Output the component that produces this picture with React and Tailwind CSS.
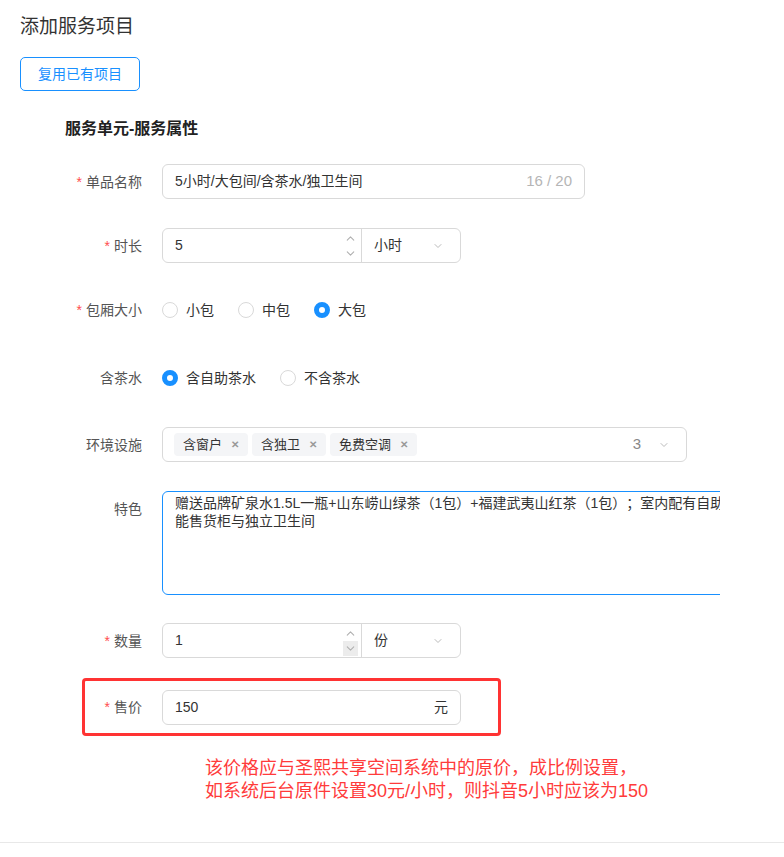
import { ChevronDown, ChevronUp } from 'lucide-react'

function Label({ required, children }) {
  return (
    <div className="w-[122px] shrink-0 text-right text-[14px] text-[#555] leading-[20px]">
      {required && <span className="text-[#ff4d4f] mr-1">*</span>}
      {children}
    </div>
  )
}

function Radio({ checked, label }) {
  return (
    <div className="flex items-center gap-2 mr-6">
      {checked ? (
        <span className="w-4 h-4 rounded-full border-[5px] border-[#1890ff] bg-white" />
      ) : (
        <span className="w-4 h-4 rounded-full border border-[#d9d9d9] bg-white" />
      )}
      <span className="text-[14px] text-[#333] leading-[20px]">{label}</span>
    </div>
  )
}

function Tag({ children }) {
  return (
    <div className="flex items-center h-[23px] pl-[9px] pr-[9px] rounded bg-[#f4f5f7] text-[13px] text-[#333] gap-[9px]">
      {children}
      <span className="text-[10px] font-bold text-[#999] leading-none">✕</span>
    </div>
  )
}

function NumberWithUnit({ value, unit, hoverDown }) {
  return (
    <div className="flex w-[299px] h-[35px] border border-[#d9d9d9] rounded-[6px] bg-white">
      <div className="flex-1 flex items-center pl-3 text-[14px] text-[#333]">{value}</div>
      <div className="w-[16px] mr-[3px] flex flex-col items-center justify-center text-[#b0b0b0]">
        <div className="h-[15px] w-[15px] flex items-center justify-center">
          <ChevronUp size={13} strokeWidth={2} />
        </div>
        <div className={`h-[15px] w-[15px] flex items-center justify-center ${hoverDown ? 'bg-[#ececec]' : ''}`}>
          <ChevronDown size={13} strokeWidth={2} />
        </div>
      </div>
      <div className="w-[99px] border-l border-[#d9d9d9] flex items-center justify-between pl-3 pr-4 text-[14px] text-[#333]">
        <span>{unit}</span>
        <ChevronDown size={12} strokeWidth={2} className="text-[#bbb]" />
      </div>
    </div>
  )
}

export default function App() {
  return (
    <div className="min-h-[857px] bg-white font-['Liberation_Sans','Noto_Sans_CJK_SC',sans-serif] [text-spacing-trim:space-all] text-[#333] overflow-hidden">
      <div className="w-[784px] h-[843px] px-5 pt-[14px] border-b border-[#e8e8e8]">
        <h1 className="text-[19px] leading-[26px] text-[#333]">添加服务项目</h1>

        <button className="mt-[17px] h-[34px] px-[17px] border border-[#1890ff] rounded-[5px] text-[14px] text-[#1890ff] bg-white">
          复用已有项目
        </button>

        <div className="mt-[27px] ml-[45px] text-[16px] font-bold leading-[22px] text-[#222]">服务单元-服务属性</div>

        {/* 单品名称 */}
        <div className="mt-[24px] flex items-center">
          <Label required>单品名称</Label>
          <div className="ml-5 w-[423px] h-[35px] border border-[#d9d9d9] rounded-[6px] flex items-center justify-between pl-3 pr-3 text-[14px]">
            <span className="text-[#333]">5小时/大包间/含茶水/独卫生间</span>
            <span className="text-[15px] text-[#b5b5b5]">16 / 20</span>
          </div>
        </div>

        {/* 时长 */}
        <div className="mt-[29px] flex items-center">
          <Label required>时长</Label>
          <div className="ml-5">
            <NumberWithUnit value="5" unit="小时" />
          </div>
        </div>

        {/* 包厢大小 */}
        <div className="mt-[29px] h-[35px] flex items-center">
          <Label required>包厢大小</Label>
          <div className="ml-5 flex items-center">
            <Radio label="小包" />
            <Radio label="中包" />
            <Radio checked label="大包" />
          </div>
        </div>

        {/* 含茶水 */}
        <div className="mt-[33px] h-[35px] flex items-center">
          <Label>含茶水</Label>
          <div className="ml-5 flex items-center">
            <Radio checked label="含自助茶水" />
            <Radio label="不含茶水" />
          </div>
        </div>

        {/* 环境设施 */}
        <div className="mt-[32px] flex items-center">
          <Label>环境设施</Label>
          <div className="ml-5 w-[525px] h-[35px] border border-[#d9d9d9] rounded-[6px] flex items-center justify-between pl-[11px] pr-4">
            <div className="flex items-center gap-1">
              <Tag>含窗户</Tag>
              <Tag>含独卫</Tag>
              <Tag>免费空调</Tag>
            </div>
            <div className="flex items-center gap-[17px] text-[15px] text-[#888]">
              <span>3</span>
              <ChevronDown size={12} strokeWidth={2} className="text-[#bbb]" />
            </div>
          </div>
        </div>

        {/* 特色 */}
        <div className="mt-[29px] flex items-start w-[700px] overflow-hidden">
          <div className="pt-[8px]">
            <Label>特色</Label>
          </div>
          <div className="ml-5 shrink-0 w-[620px] h-[104px] border border-[#1890ff] rounded-[6px] pl-3 pt-[2px] text-[14px] leading-[18px] text-[#333] whitespace-nowrap">
            赠送品牌矿泉水1.5L一瓶+山东崂山绿茶（1包）+福建武夷山红茶（1包）；室内配有自助
            <br />
            能售货柜与独立卫生间
          </div>
        </div>

        {/* 数量 */}
        <div className="mt-[28px] flex items-center">
          <Label required>数量</Label>
          <div className="ml-5">
            <NumberWithUnit value="1" unit="份" hoverDown />
          </div>
        </div>

        {/* 售价 */}
        <div className="mt-[20px] ml-[62px] w-[419px] h-[58px] border-[3px] border-[#ff3333] rounded-[4px] flex items-center">
          <div className="w-[57px] shrink-0 text-right text-[14px] text-[#555]">
            <span className="text-[#ff4d4f] mr-1">*</span>售价
          </div>
          <div className="ml-5 w-[299px] h-[35px] border border-[#d9d9d9] rounded-[6px] flex items-center justify-between pl-3 pr-3 text-[14px] text-[#333]">
            <span>150</span>
            <span>元</span>
          </div>
        </div>

        <div className="mt-[21px] ml-[185px] text-[18px] leading-[23px] text-[#ff3b3b]">
          <div>该价格应与圣熙共享空间系统中的原价，成比例设置，</div>
          <div>如系统后台原件设置30元/小时，则抖音5小时应该为150</div>
        </div>
      </div>
    </div>
  )
}
